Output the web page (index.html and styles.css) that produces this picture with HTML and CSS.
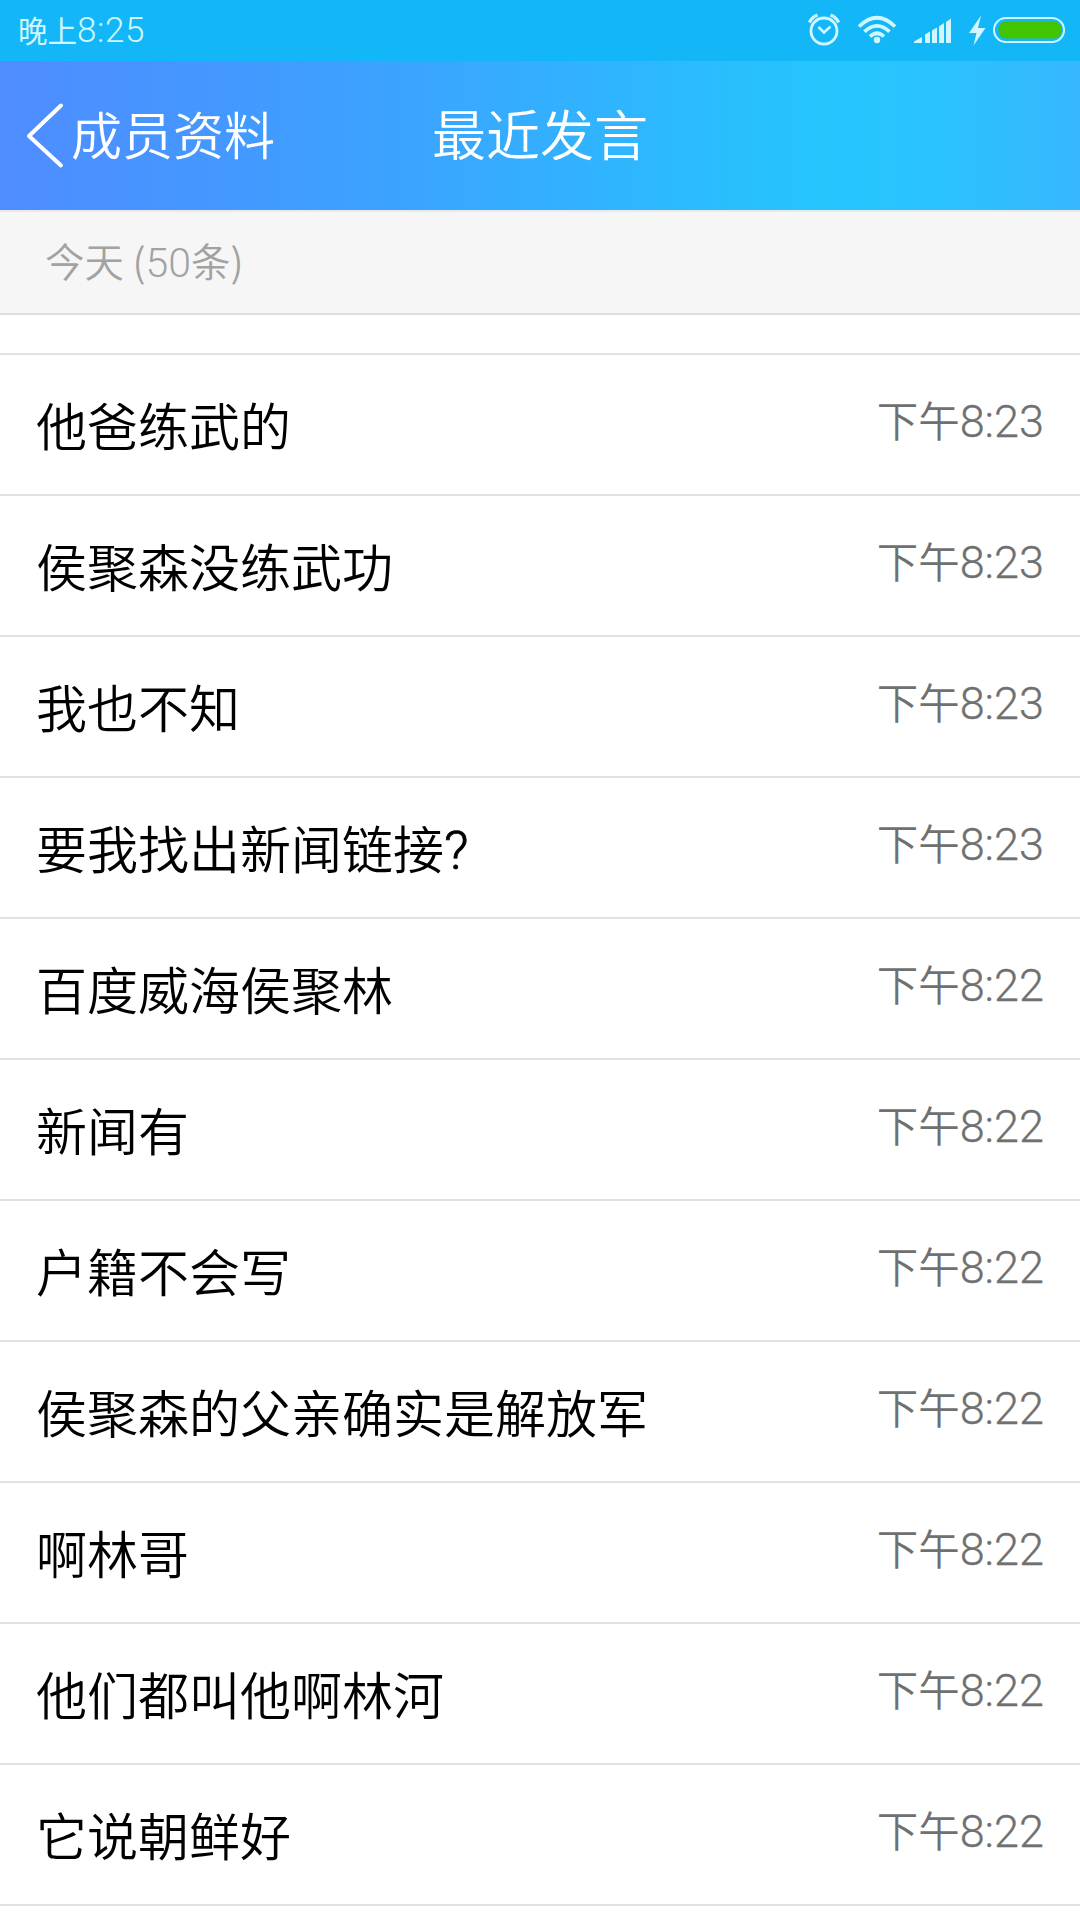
FILE: index.html
```html
<!DOCTYPE html>
<html lang="zh-CN">
<head>
<meta charset="utf-8">
<title>最近发言</title>
<link rel="stylesheet" href="styles.css">
</head>
<body>
<div class="status">
  <div class="clock">晚上<span class="num">8:25</span></div>
  <svg class="status-icons" width="270" height="61" viewBox="0 0 270 61" fill="none" stroke="#d0f7ff">
    <circle cx="14" cy="31" r="13" stroke-width="2.800"/>
    <path d="M8.500 27l5.500 5.500 6.500-6" stroke-width="2.600"/>
    <path d="M-.6 22.500Q1.500 17.500 7.500 15M20.500 15Q26.500 17.500 28.600 22.500" stroke-width="3.400"/>
    <g stroke-width="3.600">
      <path d="M49 26.500Q67 9 85 26.500"/>
      <path d="M54.500 31.800Q67 20 79.500 31.800"/>
      <path d="M60 36.500Q67 30 74 36.500"/>
    </g>
    <circle cx="67" cy="40" r="3.200" fill="#d0f7ff" stroke="none"/>
    <path fill="#d0f7ff" stroke="none" d="M104 43V41.500L112 37V43zM115 43V34.500L120 31.500V43zM122 43V30.500L127 27.500V43zM129 43V26.500L134 23V43zM136 43V22L141 18.500V43z"/>
    <path fill="#d0f7ff" stroke="none" d="M171 15.500L159 33H166.500L163.500 45.500L175.500 28H168z"/>
    <rect x="184" y="18" width="70" height="24" rx="12" stroke-width="2"/>
    <rect x="188.500" y="21.500" width="63" height="17" rx="7.500" fill="#43c400" stroke="none"/>
  </svg>
</div>
<header class="bar">
  <div class="back">
    <svg width="40" height="68" viewBox="0 0 40 68" fill="none" stroke="#fff" stroke-width="4" stroke-linecap="round" stroke-linejoin="round"><path d="M36 3.500L4 34L36 63.500"/></svg>
    <span>成员资料</span>
  </div>
  <h1 class="title">最近发言</h1>
</header>
<div class="day">今天 (<span class="num">50</span>条)</div>
<ul class="list">
  <li class="row partial"></li>
  <li class="row"><span class="msg">他爸练武的</span><span class="time">下午<span class="num">8:23</span></span></li>
  <li class="row"><span class="msg">侯聚森没练武功</span><span class="time">下午<span class="num">8:23</span></span></li>
  <li class="row"><span class="msg">我也不知</span><span class="time">下午<span class="num">8:23</span></span></li>
  <li class="row"><span class="msg">要我找出新闻链接<span class="mark">?</span></span><span class="time">下午<span class="num">8:23</span></span></li>
  <li class="row"><span class="msg">百度威海侯聚林</span><span class="time">下午<span class="num">8:22</span></span></li>
  <li class="row"><span class="msg">新闻有</span><span class="time">下午<span class="num">8:22</span></span></li>
  <li class="row"><span class="msg">户籍不会写</span><span class="time">下午<span class="num">8:22</span></span></li>
  <li class="row"><span class="msg">侯聚森的父亲确实是解放军</span><span class="time">下午<span class="num">8:22</span></span></li>
  <li class="row"><span class="msg">啊林哥</span><span class="time">下午<span class="num">8:22</span></span></li>
  <li class="row"><span class="msg">他们都叫他啊林河</span><span class="time">下午<span class="num">8:22</span></span></li>
  <li class="row"><span class="msg">它说朝鲜好</span><span class="time">下午<span class="num">8:22</span></span></li>
</ul>
</body>
</html>
```
FILE: styles.css
```css
* { box-sizing: border-box; }
body {
  margin: 0;
  height: 1920px;
  overflow: hidden;
  background: #fff;
  font-family: "Noto Sans CJK SC", sans-serif;
  font-weight: 350;
}
.num, .mark { font-family: Roboto, "Noto Sans CJK SC", sans-serif; line-height: 1; }
.status {
  height: 61px;
  background: #13b7f8;
  display: flex;
  justify-content: space-between;
  align-items: center;
  padding-left: 18px;
  color: #d0f7ff;
}
.clock { font-size: 29.5px; line-height: 58px; height: 61px; font-weight: 400; }
.clock .num { font-size: 35px; letter-spacing: 0.6px; font-weight: 350; }
.status-icons { overflow: visible; }
.bar {
  height: 149px;
  background: linear-gradient(90deg, #4f8cff 0%, #3da0ff 33%, #25c5fe 76%, #28c4ff 84%, #37b7ff 100%);
  display: grid;
  grid-template-columns: 1fr auto 1fr;
  align-items: center;
  color: #fff;
}
.back { display: flex; align-items: center; gap: 6px; padding-left: 25px; font-size: 51px; line-height: 74px; }
.back span, .title { padding-bottom: 6px; }
.title { margin: 0; font-size: 54px; font-weight: 350; line-height: 74px; }
.day {
  height: 105px;
  background: #f6f6f7;
  border-top: 2px solid #e9e9ec;
  border-bottom: 2px solid #dedede;
  padding-left: 45px;
  font-size: 39.4px;
  line-height: 96px;
  color: #a2a2a2;
}
.day .num { font-size: 41px; }
.list { list-style: none; margin: 0; padding: 0; }
.row {
  height: 141px;
  border-bottom: 2px solid #e1e1e1;
  display: flex;
  justify-content: space-between;
  padding: 0 36px;
}
.partial { height: 40px; }
.msg { font-size: 51px; line-height: 138px; color: #000; }
.mark { font-size: 54px; font-weight: 300; letter-spacing: 0; -webkit-text-stroke: 0.7px #000; }
.time { font-size: 41.5px; line-height: 128px; color: #707070; }
.time .num { font-size: 45px; -webkit-text-stroke: 0.3px #707070; }
```
